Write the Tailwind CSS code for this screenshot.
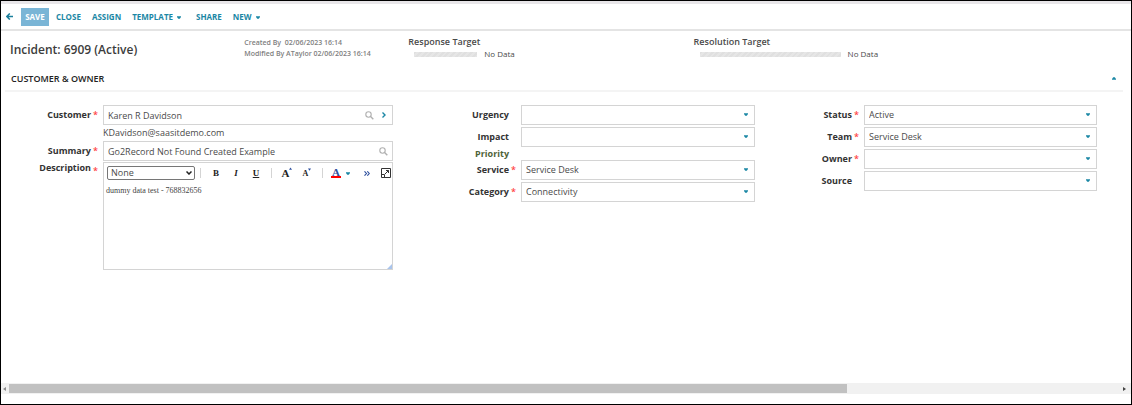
<!DOCTYPE html>
<html lang="en">
<head>
<meta charset="utf-8">
<title>Incident: 6909 (Active)</title>
<script src="https://cdn.jsdelivr.net/npm/@tailwindcss/browser@4"></script>
</head>
<body class="flex min-h-screen flex-col border border-black bg-white font-['Open_Sans',sans-serif] text-[9px] leading-3 text-[#4a4a4a]">
<svg class="hidden">
  <symbol id="down" viewBox="0 0 5 3"><path d="M0 0h5v1L3.5 3h-2L0 1z" fill="#1b87a5"/></symbol>
  <symbol id="search" viewBox="0 0 9 9"><circle cx="3.5" cy="3.5" r="2.7" fill="none" stroke="#b0b0b0" stroke-width="1.1"/><path d="M5.6 5.6l2.7 2.6" stroke="#b0b0b0" stroke-width="1.4"/></symbol>
</svg>

<nav class="flex h-[30px] items-center border-t-3 border-b-2 border-t-[#e8e6e9] border-b-[#e4e4e4] pl-[5px] text-[8px] font-bold text-[#1b87a5]">
  <button aria-label="Back" class="mr-2"><svg class="h-[7px] w-[7px]" viewBox="0 0 7 7" fill="none" stroke="#1b7f9c" stroke-width="1.6"><path d="M7 3.5H1M3.8.5l-3 3 3 3"/></svg></button>
  <button class="h-[18px] w-7 bg-[#7ab5d6] text-white">SAVE</button>
  <button class="ml-[7px]">CLOSE</button>
  <button class="ml-[11px]">ASSIGN</button>
  <button class="ml-[11px] flex items-center gap-1">TEMPLATE<svg class="mt-px h-[3px] w-1"><use href="#down"/></svg></button>
  <button class="ml-[15px]">SHARE</button>
  <button class="ml-[11px] flex items-center gap-1">NEW<svg class="mt-px h-[3px] w-1"><use href="#down"/></svg></button>
</nav>

<header class="grid h-9 grid-cols-[234fr_164fr_285fr_437fr] pl-[9px]">
  <h1 class="pt-[11px] text-[12px] leading-4 font-semibold text-[#3c3c3c]">Incident: 6909 (Active)</h1>
  <div class="pt-[6px] text-[7px] leading-[11px] font-semibold whitespace-pre text-[#808080]"><p>Created By  02/06/2023 16:14</p><p>Modified By ATaylor 02/06/2023 16:14</p></div>
  <div class="pt-[5px]">
    <h2 class="font-semibold text-[#4a4a4a]">Response Target</h2>
    <div class="flex items-center gap-[7px] pl-[6px] text-[8px]"><div class="h-[5px] w-[63px] bg-[repeating-linear-gradient(135deg,#e0e0e0_0px,#e0e0e0_2px,#e6e6e6_2px,#e6e6e6_4px)]"></div>No Data</div>
  </div>
  <div class="pt-[5px]">
    <h2 class="font-semibold text-[#4a4a4a]">Resolution Target</h2>
    <div class="flex items-center gap-[7px] pl-[6px] text-[8px]"><div class="h-[5px] w-[141px] bg-[repeating-linear-gradient(135deg,#e0e0e0_0px,#e0e0e0_2px,#e6e6e6_2px,#e6e6e6_4px)]"></div>No Data</div>
  </div>
</header>

<main class="flex-1">
  <div class="mr-2 ml-1 flex h-[25px] items-center justify-between border-b-2 border-[#f4f4f4] pr-[7px] pl-[6px]">
    <h2 class="font-semibold text-[#222]">CUSTOMER &amp; OWNER</h2>
    <button aria-label="Collapse section"><svg class="h-[3px] w-1 rotate-180"><use href="#down"/></svg></button>
  </div>

  <form class="grid grid-cols-[392fr_362fr_342fr] items-start pt-[13px] pr-[34px]">
    <div class="flex flex-col">
      <div class="flex h-5 items-center">
        <label for="customer" class="w-[90px] text-right font-bold text-[#333]">Customer</label><span class="w-3 pl-[2px] font-semibold text-[#ff4545]">*</span>
        <div class="flex h-5 flex-1 items-center border border-[#d4d4d4] pr-[6px]">
          <input id="customer" value="Karen R Davidson" class="h-full min-w-0 flex-1 pl-1 outline-none">
          <button type="button" aria-label="Search customer" class="mr-2"><svg class="h-[9px] w-[9px]"><use href="#search"/></svg></button>
          <button type="button" aria-label="Open customer"><svg class="h-[6px] w-1" viewBox="0 0 4 6" fill="none" stroke="#1b87a5" stroke-width="1.4"><path d="M.5.5L3 3 .5 5.5"/></svg></button>
        </div>
      </div>
      <p class="mb-[2px] pt-[2px] pl-[102px]">KDavidson@saasitdemo.com</p>
      <div class="flex h-5 items-center">
        <label for="summary" class="w-[90px] text-right font-bold text-[#333]">Summary</label><span class="w-3 pl-[2px] font-semibold text-[#ff4545]">*</span>
        <div class="flex h-5 flex-1 items-center border border-[#d4d4d4] pr-1">
          <input id="summary" value="Go2Record Not Found Created Example" class="h-full min-w-0 flex-1 pl-1 outline-none">
          <button type="button" aria-label="Search summary"><svg class="h-[9px] w-[9px]"><use href="#search"/></svg></button>
        </div>
      </div>
      <div class="mt-px flex items-start">
        <label for="description" class="w-[90px] text-right font-bold text-[#333]">Description</label><span class="w-3 pt-[3px] pl-[2px] font-semibold text-[#ff4545]">*</span>
        <div class="relative flex-1 border border-[#d4d4d4]">
          <div class="flex h-5 items-center pl-[3px]">
            <div class="relative w-[88px]">
              <select aria-label="Paragraph style" class="block h-[14px] w-full appearance-none rounded-[2px] border border-[#767676] pl-[3px] leading-3"><option>None</option></select>
              <svg class="pointer-events-none absolute top-[5px] right-[3px] h-1 w-[6px]" viewBox="0 0 6 4" fill="none" stroke="#222" stroke-width="1.5"><path d="M.5.5L3 3 5.5.5"/></svg>
            </div>
            <span class="mx-[5px] h-[10px] w-px bg-[#d4d4d4]"></span>
            <div class="flex font-['Liberation_Serif',serif] font-bold text-[#222]">
              <button type="button" class="w-5">B</button>
              <button type="button" class="w-5 italic">I</button>
              <button type="button" class="w-5 underline">U</button>
            </div>
            <span class="mx-[5px] h-[10px] w-px bg-[#d4d4d4]"></span>
            <button type="button" aria-label="Larger text" class="flex w-5 justify-center font-['Liberation_Serif',serif] text-[11px] font-bold text-[#222]">A<svg class="h-[3px] w-[3px]" viewBox="0 0 4 3"><path d="M0 3l2-3 2 3z" fill="#2d4f9e"/></svg></button>
            <button type="button" aria-label="Smaller text" class="flex w-5 justify-center pt-[2px] font-['Liberation_Serif',serif] text-[8px] font-bold text-[#222]">A<svg class="h-[3px] w-[3px]" viewBox="0 0 4 3"><path d="M0 0l2 3 2-3z" fill="#2d4f9e"/></svg></button>
            <span class="mx-[5px] h-[10px] w-px bg-[#d4d4d4]"></span>
            <button type="button" aria-label="Text colour" class="ml-[3px] flex items-center gap-[5px]"><span class="block h-[10px] w-[10px] border-b-2 border-[#f00] text-center font-['Liberation_Serif',serif] text-[11px] leading-[8px] font-bold text-[#2d4f9e]">A</span><svg class="mt-px h-[3px] w-1"><use href="#down"/></svg></button>
            <button type="button" aria-label="More tools" class="mr-[11px] ml-auto"><svg class="h-[5px] w-[6px]" viewBox="0 0 6 5" fill="none" stroke="#2d4f9e" stroke-width="1.1"><path d="M.5.3l2 2.2-2 2.2M3.3.3l2 2.2-2 2.2"/></svg></button>
            <button type="button" aria-label="Expand editor" class="mr-px"><svg class="h-[10px] w-[10px]" viewBox="0 0 10 10" fill="none" stroke="#333"><path d="M.5.5h9v9h-9zM.5 6.5h3v3M4 6l3.5-3.5M5 2.5h2.5V5"/></svg></button>
          </div>
          <textarea id="description" class="block h-[86px] w-full resize-none pt-[2px] pl-[2px] font-['Liberation_Serif',serif] text-[8px] leading-3 text-[#444] outline-none">dummy data test - 768832656</textarea>
          <svg class="absolute right-0 bottom-0 h-[5px] w-[5px]" viewBox="0 0 4 4"><path d="M4 0v4H0z" fill="#a9c4ec"/></svg>
        </div>
      </div>
    </div>

    <div class="flex flex-col gap-[2px]">
      <div class="flex items-center">
        <label for="urgency" class="w-[116px] text-right font-bold text-[#333]">Urgency</label><span class="w-3"></span>
        <div class="relative flex-1"><select id="urgency" class="block h-5 w-full appearance-none border border-[#d4d4d4] pl-1"><option></option></select><svg class="pointer-events-none absolute top-2 right-[7px] h-[3px] w-1"><use href="#down"/></svg></div>
      </div>
      <div class="flex items-center">
        <label for="impact" class="w-[116px] text-right font-bold text-[#333]">Impact</label><span class="w-3"></span>
        <div class="relative flex-1"><select id="impact" class="block h-5 w-full appearance-none border border-[#d4d4d4] pl-1"><option></option></select><svg class="pointer-events-none absolute top-2 right-[7px] h-[3px] w-1"><use href="#down"/></svg></div>
      </div>
      <p class="h-[9px] w-[116px] text-right leading-[9px] font-bold text-[#4f6238]">Priority</p>
      <div class="flex items-center">
        <label for="service" class="w-[116px] text-right font-bold text-[#333]">Service</label><span class="w-3 pl-[2px] font-semibold text-[#ff4545]">*</span>
        <div class="relative flex-1"><select id="service" class="block h-5 w-full appearance-none border border-[#d4d4d4] pl-1"><option>Service Desk</option></select><svg class="pointer-events-none absolute top-2 right-[7px] h-[3px] w-1"><use href="#down"/></svg></div>
      </div>
      <div class="flex items-center">
        <label for="category" class="w-[116px] text-right font-bold text-[#333]">Category</label><span class="w-3 pl-[2px] font-semibold text-[#ff4545]">*</span>
        <div class="relative flex-1"><select id="category" class="block h-5 w-full appearance-none border border-[#d4d4d4] pl-1"><option>Connectivity</option></select><svg class="pointer-events-none absolute top-2 right-[7px] h-[3px] w-1"><use href="#down"/></svg></div>
      </div>
    </div>

    <div class="flex flex-col gap-[2px]">
      <div class="flex items-center">
        <label for="status" class="w-[97px] text-right font-bold text-[#333]">Status</label><span class="w-3 pl-[2px] font-semibold text-[#ff4545]">*</span>
        <div class="relative flex-1"><select id="status" class="block h-5 w-full appearance-none border border-[#d4d4d4] pl-1"><option>Active</option></select><svg class="pointer-events-none absolute top-2 right-[7px] h-[3px] w-1"><use href="#down"/></svg></div>
      </div>
      <div class="flex items-center">
        <label for="team" class="w-[97px] text-right font-bold text-[#333]">Team</label><span class="w-3 pl-[2px] font-semibold text-[#ff4545]">*</span>
        <div class="relative flex-1"><select id="team" class="block h-5 w-full appearance-none border border-[#d4d4d4] pl-1"><option>Service Desk</option></select><svg class="pointer-events-none absolute top-2 right-[7px] h-[3px] w-1"><use href="#down"/></svg></div>
      </div>
      <div class="flex items-center">
        <label for="owner" class="w-[97px] text-right font-bold text-[#333]">Owner</label><span class="w-3 pl-[2px] font-semibold text-[#ff4545]">*</span>
        <div class="relative flex-1"><select id="owner" class="block h-5 w-full appearance-none border border-[#d4d4d4] pl-1"><option></option></select><svg class="pointer-events-none absolute top-2 right-[7px] h-[3px] w-1"><use href="#down"/></svg></div>
      </div>
      <div class="flex items-center">
        <label for="source" class="w-[97px] text-right font-bold text-[#333]">Source</label><span class="w-3"></span>
        <div class="relative flex-1"><select id="source" class="block h-5 w-full appearance-none border border-[#d4d4d4] pl-1"><option></option></select><svg class="pointer-events-none absolute top-2 right-[7px] h-[3px] w-1"><use href="#down"/></svg></div>
      </div>
    </div>
  </form>
</main>

<div class="mb-[10px] flex h-[11px] items-center bg-[#f1f1f1]">
  <svg class="mr-[3px] ml-[2px] h-1 w-[3px]" viewBox="0 0 3 4"><path d="M3 0v4L0 2z" fill="#8a8a8a"/></svg>
  <div class="flex flex-1"><div class="h-[9px] flex-[838] bg-[#c1c1c1]"></div><div class="flex-[273]"></div></div>
  <svg class="mr-[5px] ml-[3px] h-1 w-[3px]" viewBox="0 0 3 4"><path d="M0 0v4l3-2z" fill="#444"/></svg>
</div>
</body>
</html>
